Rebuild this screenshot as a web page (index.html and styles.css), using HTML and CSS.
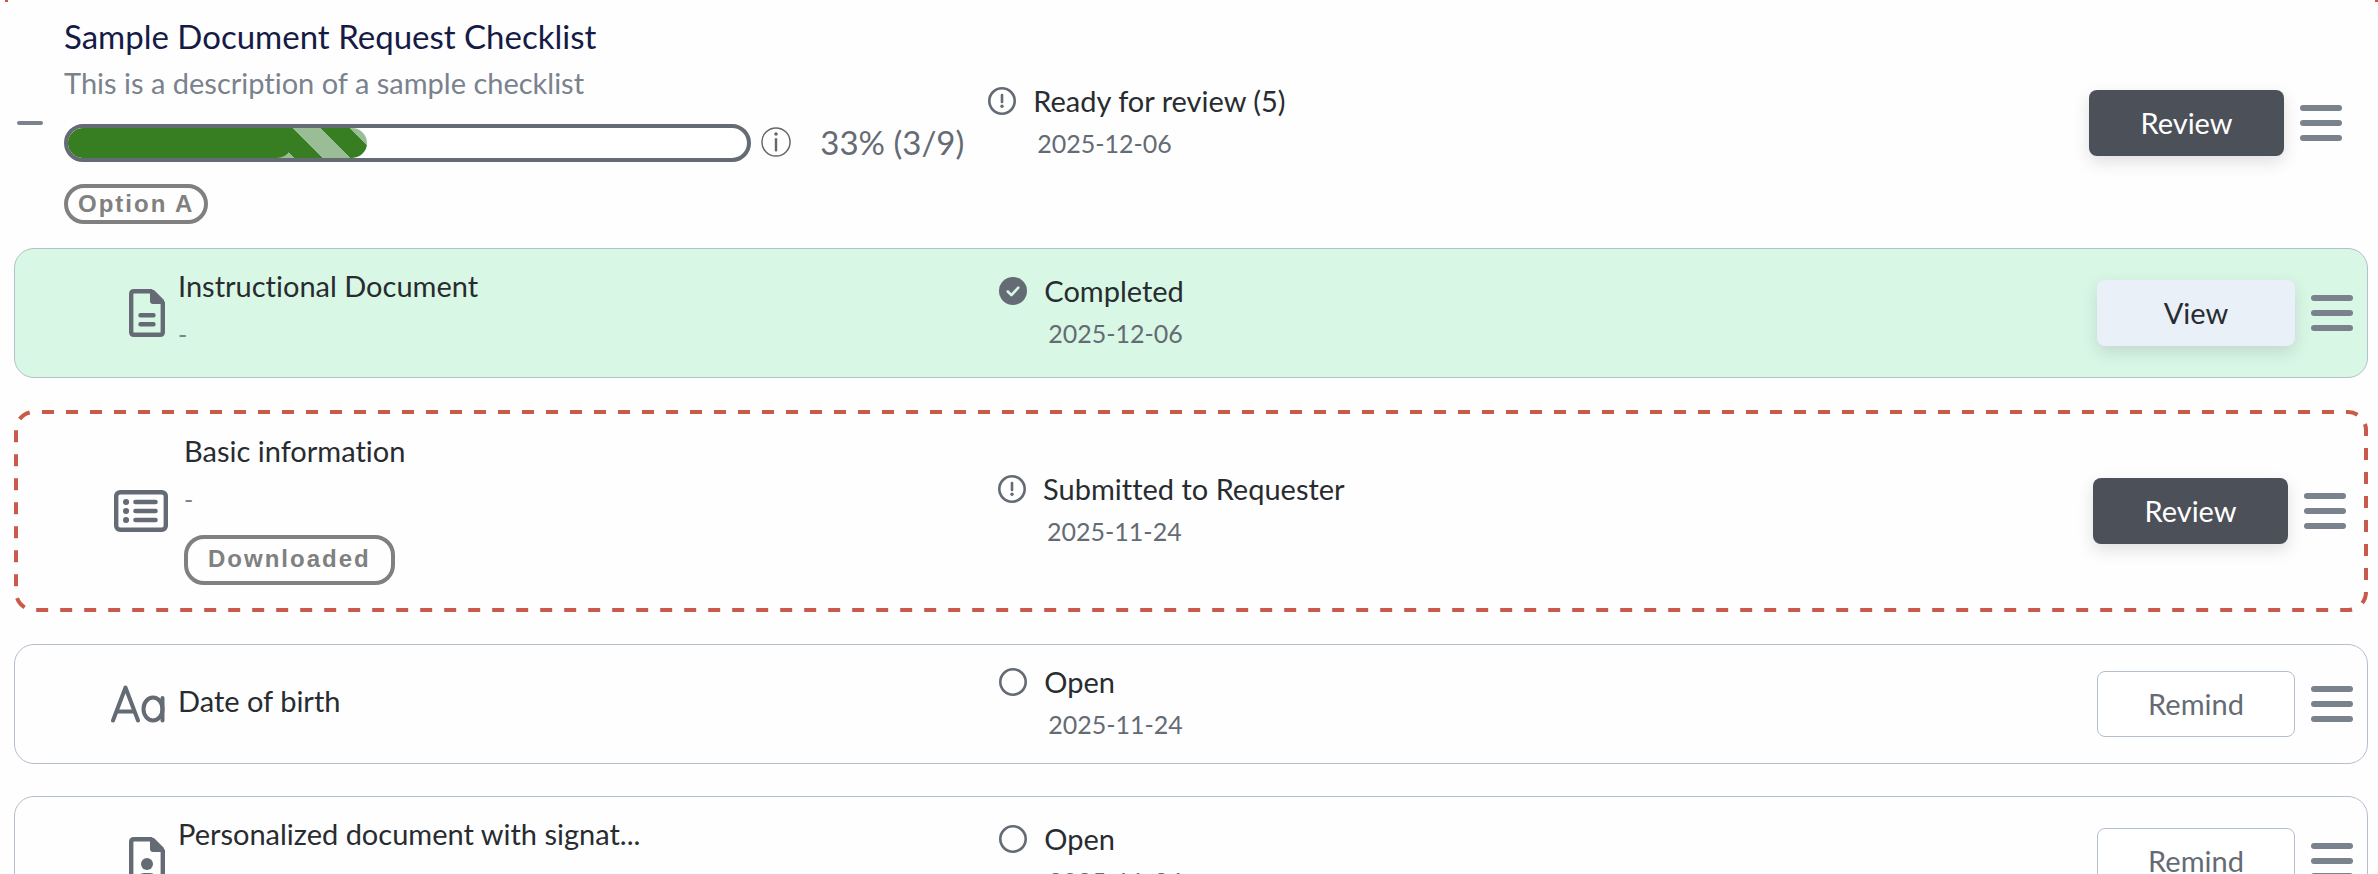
FILE: index.html
```html
<!DOCTYPE html>
<html lang="en">
<head>
    <meta charset="UTF-8">
    <meta name="viewport" content="width=device-width, initial-scale=1">
    <title>Document Request Checklist</title>
    <link rel="stylesheet" href="styles.css">
</head>
<body>
    <main class="checklist">
        <header class="row checklist-header">
            <div class="summary">
                <button class="collapse" aria-label="Collapse checklist"><span></span></button>
                <div class="summary-body">
                    <h1>Sample Document Request Checklist</h1>
                    <p class="description">This is a description of a sample checklist</p>
                    <div class="progress-line">
                        <div class="progress" role="progressbar" aria-label="Progress" aria-valuenow="33" aria-valuemin="0" aria-valuemax="100">
                            <div class="progress-pending" style="width: 44%"></div>
                            <div class="progress-done" style="width: 33%"></div>
                        </div>
                        <svg class="info" viewBox="0 0 32 32" aria-hidden="true">
                            <circle cx="16" cy="16" r="15" fill="none" stroke="currentColor" stroke-width="1.6"/>
                            <circle cx="16" cy="7.5" r="1.9" fill="currentColor"/>
                            <path d="M16 12v14" stroke="currentColor" stroke-width="2.6"/>
                        </svg>
                        <span class="progress-text">33% (3/9)</span>
                    </div>
                    <span class="tag tag-small">Option A</span>
                </div>
            </div>
            <div class="status">
                <svg class="status-icon" viewBox="0 0 28 28" aria-hidden="true">
                    <circle cx="14" cy="14" r="12.7" fill="none" stroke="currentColor" stroke-width="2.6"/>
                    <path d="M14 8v7" stroke="currentColor" stroke-width="2.6" stroke-linecap="round"/>
                    <circle cx="14" cy="19.3" r="1.7" fill="currentColor"/>
                </svg>
                <div>
                    <p class="status-name">Ready for review (5)</p>
                    <p class="date">2025-12-06</p>
                </div>
            </div>
            <div class="actions">
                <button class="btn btn-dark">Review</button>
                <button class="menu" aria-label="Menu"><span></span><span></span><span></span></button>
            </div>
        </header>

        <section class="row card completed">
            <div class="item">
                <div class="item-icon">
                    <svg width="36" height="48" viewBox="0 0 36 48" aria-hidden="true">
                        <path d="M5 2.2h17L33.8 14v29q0 2.8-2.8 2.8H5q-2.8 0-2.8-2.8V5q0-2.8 2.8-2.8z" fill="none" stroke="currentColor" stroke-width="4.4"/>
                        <path d="M21 1h4l10 10v4H24q-3 0-3-3z" fill="currentColor"/>
                        <path d="M11.5 26.3h13M11.5 35.3h13" stroke="currentColor" stroke-width="4.4" stroke-linecap="round"/>
                    </svg>
                </div>
                <div class="item-text">
                    <p class="item-name">Instructional Document</p>
                    <p class="item-note">-</p>
                </div>
            </div>
            <div class="status">
                <svg class="status-icon" viewBox="0 0 28 28" aria-hidden="true">
                    <circle cx="14" cy="14" r="14" fill="currentColor"/>
                    <path d="M8.8 14.5l3.6 3.6 6.9-7.4" fill="none" stroke="#d9f7e5" stroke-width="2.6" stroke-linecap="round" stroke-linejoin="round"/>
                </svg>
                <div>
                    <p class="status-name">Completed</p>
                    <p class="date">2025-12-06</p>
                </div>
            </div>
            <div class="actions">
                <button class="btn btn-light">View</button>
                <button class="menu" aria-label="Menu"><span></span><span></span><span></span></button>
            </div>
        </section>

        <section class="row card submitted">
            <svg class="outline" aria-hidden="true"><rect x="2" y="2" rx="18"/></svg>
            <div class="item">
                <div class="item-icon">
                    <svg width="54" height="42" viewBox="0 0 54 42" aria-hidden="true">
                        <rect x="2.2" y="2.2" width="49.6" height="37.6" rx="4" fill="none" stroke="currentColor" stroke-width="4.4"/>
                        <path d="M21.5 12h20M21.5 21h20M21.5 30h20" stroke="currentColor" stroke-width="4.6" stroke-linecap="round"/>
                        <path d="M12 12h.1M12 21h.1M12 30h.1" stroke="currentColor" stroke-width="6" stroke-linecap="round"/>
                    </svg>
                </div>
                <div class="item-text">
                    <p class="item-name">Basic information</p>
                    <p class="item-note">-</p>
                    <span class="tag">Downloaded</span>
                </div>
            </div>
            <div class="status">
                <svg class="status-icon" viewBox="0 0 28 28" aria-hidden="true">
                    <circle cx="14" cy="14" r="12.7" fill="none" stroke="currentColor" stroke-width="2.6"/>
                    <path d="M14 8v7" stroke="currentColor" stroke-width="2.6" stroke-linecap="round"/>
                    <circle cx="14" cy="19.3" r="1.7" fill="currentColor"/>
                </svg>
                <div>
                    <p class="status-name">Submitted to Requester</p>
                    <p class="date">2025-11-24</p>
                </div>
            </div>
            <div class="actions">
                <button class="btn btn-dark">Review</button>
                <button class="menu" aria-label="Menu"><span></span><span></span><span></span></button>
            </div>
        </section>

        <section class="row card">
            <div class="item">
                <div class="item-icon">
                    <svg width="54" height="38" viewBox="0 0 54 38" aria-hidden="true">
                        <g fill="none" stroke="currentColor" stroke-width="4" stroke-linecap="round" stroke-linejoin="round">
                            <polyline points="2,35.5 14.5,2.5 27,35.5"/>
                            <line x1="6" y1="26.5" x2="23" y2="26.5"/>
                            <ellipse cx="42" cy="24" rx="9.5" ry="11.5"/>
                            <line x1="51.5" y1="13" x2="51.5" y2="35.5"/>
                        </g>
                    </svg>
                </div>
                <div class="item-text">
                    <p class="item-name">Date of birth</p>
                </div>
            </div>
            <div class="status">
                <svg class="status-icon" viewBox="0 0 28 28" aria-hidden="true">
                    <circle cx="14" cy="14" r="12.7" fill="none" stroke="currentColor" stroke-width="2.6"/>
                </svg>
                <div>
                    <p class="status-name">Open</p>
                    <p class="date">2025-11-24</p>
                </div>
            </div>
            <div class="actions">
                <button class="btn btn-outline">Remind</button>
                <button class="menu" aria-label="Menu"><span></span><span></span><span></span></button>
            </div>
        </section>

        <section class="row card">
            <div class="item">
                <div class="item-icon">
                    <svg width="36" height="48" viewBox="0 0 36 48" aria-hidden="true">
                        <path d="M5 2.2h17L33.8 14v29q0 2.8-2.8 2.8H5q-2.8 0-2.8-2.8V5q0-2.8 2.8-2.8z" fill="none" stroke="currentColor" stroke-width="4.4"/>
                        <path d="M21 1h4l10 10v4H24q-3 0-3-3z" fill="currentColor"/>
                        <circle cx="18" cy="27" r="6" fill="currentColor"/>
                        <path d="M9 42q0-6 6-6h6q6 0 6 6z" fill="currentColor"/>
                    </svg>
                </div>
                <div class="item-text">
                    <p class="item-name">Personalized document with signat...</p>
                    <p class="item-note">-</p>
                </div>
            </div>
            <div class="status">
                <svg class="status-icon" viewBox="0 0 28 28" aria-hidden="true">
                    <circle cx="14" cy="14" r="12.7" fill="none" stroke="currentColor" stroke-width="2.6"/>
                </svg>
                <div>
                    <p class="status-name">Open</p>
                    <p class="date">2025-11-24</p>
                </div>
            </div>
            <div class="actions">
                <button class="btn btn-outline">Remind</button>
                <button class="menu" aria-label="Menu"><span></span><span></span><span></span></button>
            </div>
        </section>
    </main>
</body>
</html>
```
FILE: styles.css
```css
* {
    box-sizing: border-box;
}
body {
    margin: 0;
    font-family: Lato, sans-serif;
    font-size: 29px;
    line-height: 40px;
    font-variant-ligatures: none;
    color: #282c30;
    background-color: #fefefe;
}
h1, p {
    margin: 0;
}
svg {
    display: block;
    flex: none;
}
button {
    font-family: inherit;
    cursor: pointer;
}
.checklist {
    position: relative;
}
/* ends of the dashed frame that runs above the list */
.checklist::before, .checklist::after {
    content: "";
    position: absolute;
    top: 0;
    width: 3px;
    height: 2px;
    background: #c95a49;
}
.checklist::before {
    left: 5px;
}
.checklist::after {
    right: 0;
}
.row {
    display: grid;
    grid-template-columns: 42.1% 1fr auto;
    align-items: center;
}

/* header */
.checklist-header {
    padding: 14px 36px 16px 4px;
}
.summary {
    display: flex;
    align-items: center;
}
.collapse {
    width: 60px;
    height: 40px;
    padding: 0 13px;
    border: none;
    background: none;
}
.collapse span {
    display: block;
    width: 26px;
    height: 4px;
    border-radius: 2px;
    background: #7a828d;
}
.summary-body {
    flex: 1;
    padding-bottom: 8px;
}
h1 {
    font-size: 33px;
    font-weight: 400;
    line-height: 44px;
    color: #151b44;
}
.description {
    margin-top: 5px;
    color: #7a828d;
}
.progress-line {
    display: flex;
    align-items: center;
    height: 38px;
    margin: 21px 0 22px;
    padding-right: 24px;
}
.progress {
    flex: 1;
    position: relative;
    height: 38px;
    border: 4px solid #646b74;
    border-radius: 19px;
    overflow: hidden;
    background: #fff;
}
.progress-done, .progress-pending {
    position: absolute;
    top: 0;
    left: 0;
    height: 100%;
    border-radius: 15px;
    background: #377d22;
}
.progress-pending {
    background: repeating-linear-gradient(45deg, #377d22 0, #377d22 20px, #9bbd95 20px, #9bbd95 40px);
}
.info {
    width: 32px;
    height: 32px;
    margin: 0 28px 0 9px;
    padding-bottom: 2px;
    color: #666;
}
.progress-text {
    padding-bottom: 2px;
    font-size: 33px;
    color: #646b74;
}
.tag {
    display: block;
    width: fit-content;
    margin-top: 16px;
    padding: 6px 20px 8px;
    border: 4px solid #808080;
    border-radius: 20px;
    font-family: "Liberation Sans", Arial, sans-serif;
    font-size: 24px;
    font-weight: 700;
    line-height: 28px;
    letter-spacing: 2px;
    color: #808080;
}
.tag-small {
    margin-top: 0;
    padding: 2px 10px;
}

/* cards */
.card {
    position: relative;
    margin: 0 10px 32px 14px;
    padding: 17px 14px 17px 0;
    border: 1px solid #b4bfcd;
    border-radius: 20px;
}
.completed {
    background: #d9f7e5;
}
.submitted {
    padding-right: 18px;
    border: 4px solid transparent;
}
.outline {
    position: absolute;
    top: -4px;
    left: -4px;
    width: calc(100% + 8px);
    height: calc(100% + 8px);
    pointer-events: none;
}
.outline rect {
    width: calc(100% - 4px);
    height: calc(100% - 4px);
    fill: none;
    stroke: #c95a49;
    stroke-width: 4;
    stroke-dasharray: 12 12;
    stroke-dashoffset: 16;
}
.item {
    display: flex;
    align-items: center;
}
.item-icon {
    display: flex;
    justify-content: flex-end;
    width: 150px;
    margin-right: 13px;
    color: #646b74;
}
.submitted .item-icon {
    margin-right: 16px;
}
.item-text {
    padding-bottom: 6px;
}
.item-note {
    margin-top: 8px;
    font-size: 25px;
    color: #7a828d;
}

/* status */
.status {
    display: flex;
    gap: 17px;
    padding-bottom: 2px;
}
.status-icon {
    width: 28px;
    height: 28px;
    margin-top: 6px;
    color: #646b74;
}
.date {
    margin: 2px 0 0 4px;
    font-size: 25px;
    color: #646b74;
}

/* buttons */
.actions {
    display: flex;
    align-items: center;
    gap: 16px;
}
.btn {
    width: 198px;
    height: 66px;
    padding: 0 0 2px;
    border: none;
    border-radius: 8px;
    font-size: 29px;
}
.btn-dark {
    width: 195px;
    background: #4c5058;
    color: #fff;
    box-shadow: 0 6px 16px rgba(60, 64, 80, 0.16);
}
.btn-light {
    background: #e9f0f8;
    color: #282c30;
    box-shadow: 0 6px 16px rgba(60, 64, 80, 0.16);
}
.btn-outline {
    border: 1px solid #b4bfcd;
    background: #fff;
    color: #646b74;
}
.menu {
    display: flex;
    flex-direction: column;
    gap: 9px;
    padding: 0;
    border: none;
    background: none;
}
.menu span {
    width: 42px;
    height: 6px;
    border-radius: 3px;
    background: #7a828d;
}
```
